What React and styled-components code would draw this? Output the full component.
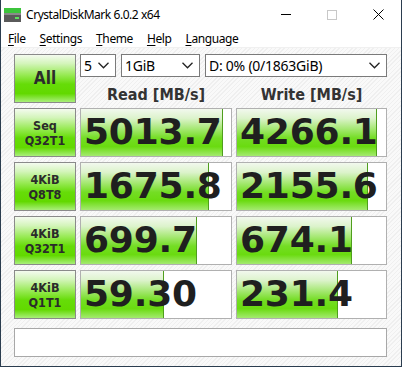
import React from 'react'
import styled, { createGlobalStyle } from 'styled-components'

const Global = createGlobalStyle`
html, body { margin:0; padding:0; background:#fff; }
`

const Window = styled.div`
width:402px;
height:367px;
box-sizing:border-box;
border:1px solid #2b3d4f;
border-top:none;
display:flex;
flex-direction:column;
background:#fff;
font-family:"Noto Sans", "Open Sans", sans-serif;
overflow:hidden;
`
const TitleBar = styled.div`
height:29px;
display:flex;
align-items:center;
padding-left:3px;
`
const Title = styled.span`
flex:1;
font-size:12px;
letter-spacing:-0.45px;
color:#000;
margin-left:5px;
`
const Caption = styled.div`
width:46px;
height:29px;
display:flex;
align-items:center;
justify-content:center;
`
const MenuBar = styled.div`
height:18px;
display:flex;
gap:14px;
padding-left:7px;
align-items:center;
font-size:12px;
letter-spacing:-0.4px;
border-bottom:1px solid #f0f0f0;
`
const MenuItem = styled.span`
color:#000;
u{ text-decoration:underline; text-underline-offset:2px; }
`
const Content = styled.div`
flex:1;
padding:6px 0 0 13px;
background:repeating-linear-gradient(135deg, #f9f9f9 0 2px, #efefef 2px 3px);
`
const Grid = styled.div`
display:grid;
grid-template-columns:62px 152px 151px;
grid-template-rows:23px 21px repeat(4, 49px);
column-gap:4px;
row-gap:5px;
`
const GreenButton = styled.div`
box-sizing:border-box;
border:1px solid #8a8a8a;
background:linear-gradient(to bottom, #f4fbef 0%, #d4f5bb 18%, #98ea55 42%, #66dc08 62%, #62d900 82%, #a9ef7a 100%);
display:flex;
align-items:center;
justify-content:center;
text-align:center;
font-family:"DejaVu Sans Condensed", "DejaVu Sans", sans-serif;
font-weight:bold;
color:#2b2b2b;
font-size:${p => p.$big ? '17px' : '12.5px'};
line-height:${p => p.$big ? '1' : '15px'};
grid-row:${p => p.$span ? 'span 2' : 'auto'};
`
const SelectRow = styled.div`
grid-column:2 / 4;
display:flex;
gap:5px;
`
const Select = styled.div`
box-sizing:border-box;
width:${p => p.$w}px;
height:23px;
border:1px solid #7a7a7a;
background:#fff;
display:flex;
align-items:center;
justify-content:space-between;
padding:0 6px 0 3px;
font-size:14px;
letter-spacing:-0.25px;
color:#000;
`
const Header = styled.div`
display:flex;
align-items:center;
justify-content:center;
font-family:"DejaVu Sans Condensed", "DejaVu Sans", sans-serif;
font-weight:bold;
font-size:16px;
color:#333;
padding-top:3px;
`
const Cell = styled.div`
position:relative;
box-sizing:border-box;
border:1px solid #b0b0b0;
background:#fff;
overflow:hidden;
`
const Bar = styled.div`
position:absolute;
left:0;
top:0;
bottom:0;
border-right:1px solid #4f9e1d;
background:linear-gradient(to bottom, #f2f8ee 0%, #dcf3cb 20%, #a6e874 42%, #74dd24 62%, #6adb10 80%, #a4ea70 100%);
`
const Value = styled.div`
position:relative;
height:100%;
display:flex;
align-items:center;
padding:0 0 3px 3px;
box-sizing:border-box;
font-family:"DejaVu Sans", sans-serif;
font-weight:bold;
font-size:36px;
letter-spacing:-0.2px;
color:#1f1f1f;
white-space:nowrap;
`
const StatusBar = styled.div`
box-sizing:border-box;
margin-top:9px;
width:373px;
height:29px;
border:1px solid #a8a8a8;
background:#fff;
`

const Chevron = () => (
  <svg width="11" height="7" viewBox="0 0 11 7">
    <polyline points="0.5,0.8 5.5,5.8 10.5,0.8" fill="none" stroke="#222" strokeWidth="1.3" />
  </svg>
)

const AppIcon = () => (
  <svg width="17" height="14" viewBox="0 0 17 14">
    <rect x="0" y="0" width="17" height="5" fill="#3cc43c" />
    <rect x="0" y="5" width="17" height="9" fill="#5a5a5a" />
    <rect x="0" y="5" width="17" height="2" fill="#8a8a8a" />
    <rect x="11" y="9" width="4" height="2" fill="#5fe05f" />
  </svg>
)

const barWidth = v => Math.round(30.6 * (Math.log10(v) + 0.91))

const rows = [
  { label: ['Seq', 'Q32T1'], read: '5013.7', write: '4266.1' },
  { label: ['4KiB', 'Q8T8'], read: '1675.8', write: '2155.6' },
  { label: ['4KiB', 'Q32T1'], read: '699.7', write: '674.1' },
  { label: ['4KiB', 'Q1T1'], read: '59.30', write: '231.4' },
]

const Result = ({ value }) => (
  <Cell>
    <Bar style={{ width: barWidth(parseFloat(value)) }} />
    <Value>{value}</Value>
  </Cell>
)

export default function App() {
  return (
    <Window>
      <Global />
      <TitleBar>
        <AppIcon />
        <Title>CrystalDiskMark 6.0.2 x64</Title>
        <Caption>
          <svg width="10" height="1"><rect width="10" height="1" fill="#000" /></svg>
        </Caption>
        <Caption>
          <svg width="10" height="10"><rect x="0.5" y="0.5" width="9" height="9" fill="none" stroke="#c8c8c8" /></svg>
        </Caption>
        <Caption>
          <svg width="11" height="11" viewBox="0 0 11 11">
            <path d="M0.5 0.5 L10.5 10.5 M10.5 0.5 L0.5 10.5" stroke="#000" strokeWidth="1" />
          </svg>
        </Caption>
      </TitleBar>
      <MenuBar>
        <MenuItem><u>F</u>ile</MenuItem>
        <MenuItem><u>S</u>ettings</MenuItem>
        <MenuItem><u>T</u>heme</MenuItem>
        <MenuItem><u>H</u>elp</MenuItem>
        <MenuItem><u>L</u>anguage</MenuItem>
      </MenuBar>
      <Content>
        <Grid>
          <GreenButton $big $span>All</GreenButton>
          <SelectRow>
            <Select $w={36}><span>5</span><Chevron /></Select>
            <Select $w={79}><span>1GiB</span><Chevron /></Select>
            <Select $w={182}><span>D: 0% (0/1863GiB)</span><Chevron /></Select>
          </SelectRow>
          <Header>Read [MB/s]</Header>
          <Header>Write [MB/s]</Header>
          {rows.map(r => (
            <React.Fragment key={r.label.join() + r.read}>
              <GreenButton>{r.label[0]}<br />{r.label[1]}</GreenButton>
              <Result value={r.read} />
              <Result value={r.write} />
            </React.Fragment>
          ))}
        </Grid>
        <StatusBar />
      </Content>
    </Window>
  )
}
